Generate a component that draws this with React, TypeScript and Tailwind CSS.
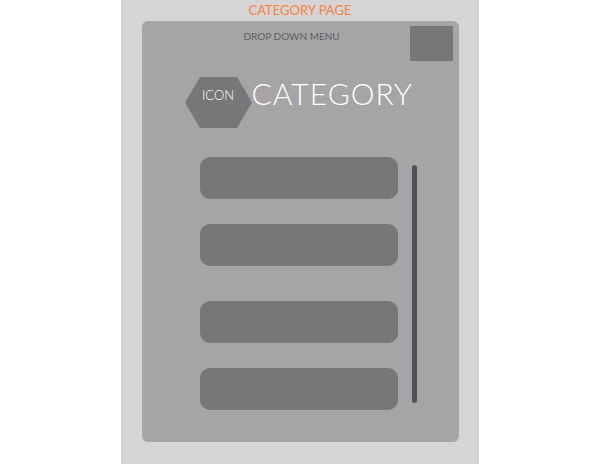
import React from "react";

const Hexagon: React.FC = () => {
  return (
    <div className="relative w-[67px] h-[51px] shrink-0">
      <svg width="67" height="51" viewBox="0 0 67 51" className="absolute inset-0">
        <polygon points="15,0 52,0 67,25.5 52,51 15,51 0,25.5" fill="#777678" />
      </svg>
      <div className="absolute inset-0 flex items-center justify-center pb-[14px]">
        <span className="text-[13px] leading-none font-light text-white">ICON</span>
      </div>
    </div>
  );
};

const App: React.FC = () => {
  // les quatre blocs de la liste
  const rows = ["mt-0", "mt-[25px]", "mt-[35px]", "mt-[25px]"];

  return (
    <div className="w-full h-[464px] bg-white flex justify-center font-['Lato','Liberation_Sans',sans-serif]">
      <div className="w-[358px] h-full bg-[#d6d4d5] flex flex-col items-center">
        {/* Titre */}
        <p className="h-[21px] text-[13px] leading-[21px] text-[#f5813f]">CATEGORY PAGE</p>

        {/* Panneau principal */}
        <div className="w-[317px] h-[421px] bg-[#a6a4a6] rounded-[6px] flex flex-col">
          {/* En-tête */}
          <div className="flex pt-[5px]">
            <span className="pl-[102px] pt-[4px] text-[10px] leading-[12px] text-[#5f5e60]">
              DROP DOWN MENU
            </span>
            <div className="ml-auto mr-[6px] w-[43px] h-[35px] bg-[#777678]" />
          </div>

          {/* Icône + titre */}
          <div className="mt-[16px] flex items-start pl-[43px]">
            <Hexagon />
            <h1 className="mt-[1px] text-[30px] leading-[30px] font-light text-white tracking-[1px]">
              CATEGORY
            </h1>
          </div>

          {/* Liste + barre de défilement */}
          <div className="mt-[29px] flex pl-[58px]">
            <div className="flex flex-col w-[198px]">
              {rows.map((m, i) => (
                <div key={i} className={`${m} h-[42px] rounded-[10px] bg-[#777678]`} />
              ))}
            </div>
            <div className="ml-[14px] mt-[8px] w-[5px] h-[238px] rounded-full bg-[#535256]" />
          </div>
        </div>
      </div>
    </div>
  );
};

export default App;
